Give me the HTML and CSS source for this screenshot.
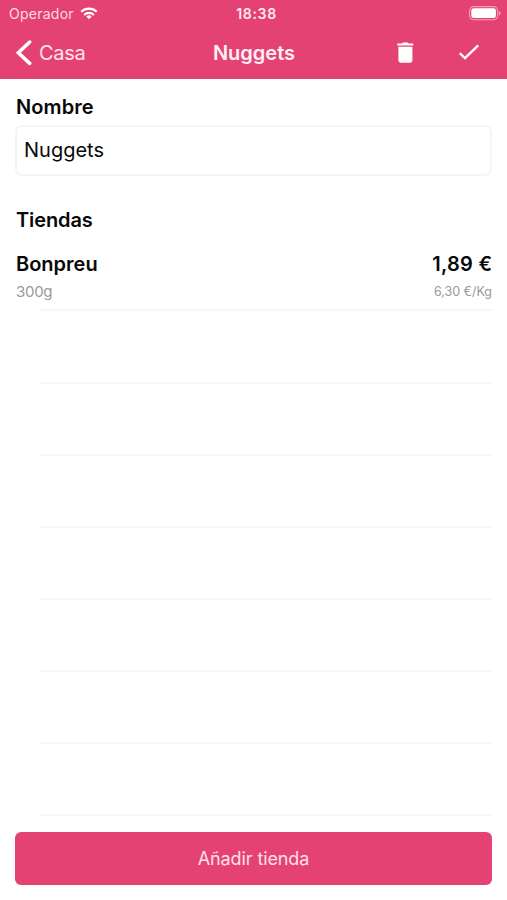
FILE: index.html
```html
<!DOCTYPE html>
<html lang="es">
<head>
<meta charset="utf-8">
<title>Nuggets</title>
<link rel="stylesheet" href="styles.css">
</head>
<body>
<header class="header">
  <div class="status">
    <div class="carrier"><span class="carrier-name">Operador</span>
      <svg class="wifi" width="18" height="13" viewBox="0 0 18 13" fill="none" stroke="#fff" stroke-width="2.1"><path d="M1.2 4.8a11.2 11.2 0 0 1 15.6 0M4.1 7.9a7 7 0 0 1 9.8 0"/><path d="M9 12.3L6.3 9.6a3.9 3.9 0 0 1 5.4 0z" fill="#fff" stroke="none"/></svg>
    </div>
    <span class="clock">18:38</span>
    <svg class="battery" width="32" height="15" viewBox="0 0 32 15"><rect x=".6" y=".6" width="28" height="13.2" rx="4" fill="none" stroke="#fff" stroke-opacity=".5" stroke-width="1.1"/><rect x="2.3" y="2.3" width="24.6" height="9.8" rx="2.3" fill="#fff"/><path d="M30 5v4.4q1.5-.6 1.5-2.2T30 5z" fill="#fff" fill-opacity=".6"/></svg>
  </div>
  <nav class="nav">
    <a class="back"><svg width="17" height="27" viewBox="0 0 17 27" fill="none" stroke="#fff" stroke-width="3.5" stroke-linecap="round"><path d="M14.7 2L3.3 12.7L14.7 23.4"/></svg><span class="back-label">Casa</span></a>
    <h1 class="title">Nuggets</h1>
    <div class="actions">
      <svg width="18" height="22" viewBox="0 0 18 22" fill="#fff"><path d="M1.3 1.5h4.5L6.9.4h4.8l1.1 1.1h4.5v2.1h-16z"/><path d="M2.4 4.7h14v13.9q0 2.1-2.2 2.1H4.6q-2.2 0-2.2-2.1z"/></svg>
      <svg width="22" height="18" viewBox="0 0 22 18" fill="none" stroke="#fff" stroke-width="2.3"><path d="M1.8 9.1L7 14.2L20.2 1.4"/></svg>
    </div>
  </nav>
</header>
<main class="content">
  <h2 class="label name-label"><span>Nombre</span></h2>
  <div class="field"><span class="field-text">Nuggets</span></div>
  <h2 class="label shops-label"><span>Tiendas</span></h2>
  <section class="list">
    <article class="item">
      <div class="line"><span class="shop">Bonpreu</span><span class="price">1,89 €</span></div>
      <div class="line detail"><span class="amount">300g</span><span class="unit">6,30 €/Kg</span></div>
    </article>
    <div class="row"></div><div class="row"></div><div class="row"></div><div class="row"></div><div class="row"></div><div class="row"></div><div class="row"></div>
  </section>
  <button class="add"><span>Añadir tienda</span></button>
</main>
</body>
</html>
```
FILE: styles.css
```css
* { box-sizing: border-box; }
body {
  margin: 0;
  height: 900px;
  overflow: hidden;
  background: #fff;
  color: #080808;
  font-family: Inter, "Liberation Sans", sans-serif;
}
h1, h2 { margin: 0; }
svg { display: block; flex: none; }
.header { height: 79px; background: #e54274; color: #fff; }
.status, .nav {
  display: grid;
  grid-template-columns: 1fr auto 1fr;
  align-items: center;
}
.status { height: 27px; padding: 0 6px 0 9px; }
.carrier { display: flex; align-items: center; gap: 6px; }
.carrier-name { font-size: 14px; letter-spacing: .25px; color: #ffd9e5; }
.clock { font-size: 14px; font-weight: 600; letter-spacing: .7px; color: #ffeaf1; margin-left: 3px; }
.battery { justify-self: end; }
.nav { height: 52px; padding: 0 27px 0 15px; }
.back { display: flex; align-items: center; gap: 7px; }
.back-label { font-size: 20px; letter-spacing: -.3px; line-height: 24px; color: #ffe3ec; }
.title { font-size: 20px; font-weight: 600; line-height: 26px; color: #ffeff4; margin-left: 13px; }
.actions { display: flex; align-items: center; justify-content: flex-end; gap: 44px; }
.content { padding: 0 15px; }
.label { font-size: 20px; font-weight: 600; line-height: 26px; padding-left: 1px; }
.name-label { margin-top: 15px; letter-spacing: .1px; }
.field {
  height: 51px;
  margin-top: 5px;
  padding: 0 0 2px 7px;
  display: flex;
  align-items: center;
  border: 2px solid #f5f5f5;
  border-radius: 7px;
  font-size: 20px;
}
.shops-label { margin-top: 31px; letter-spacing: -.1px; }
.list { height: 584px; }
.item { height: 76px; padding: 17px 0 0 1px; }
.line { display: flex; justify-content: space-between; align-items: center; height: 28px; font-size: 20px; font-weight: 600; }
.price { letter-spacing: .25px; margin-right: -.25px; }
.detail { height: 27px; color: #999; font-weight: 400; }
.amount { font-size: 15px; letter-spacing: -.3px; }
.unit { font-size: 12.5px; padding-bottom: 1px; }
.row { height: 72px; margin-left: 25px; border-top: 2px solid #f7f7f7; }
.item + .row { height: 73px; }
.row:last-child { height: 74px; border-bottom: 2px solid #f7f7f7; }
.add {
  display: block;
  width: 100%;
  height: 53px;
  margin-top: 15px;
  padding: 0;
  border: 0;
  border-radius: 6px;
  background: #e54274;
  color: #ffe0ea;
  font: 18px Inter, "Liberation Sans", sans-serif;
  letter-spacing: -.1px;
}
```
